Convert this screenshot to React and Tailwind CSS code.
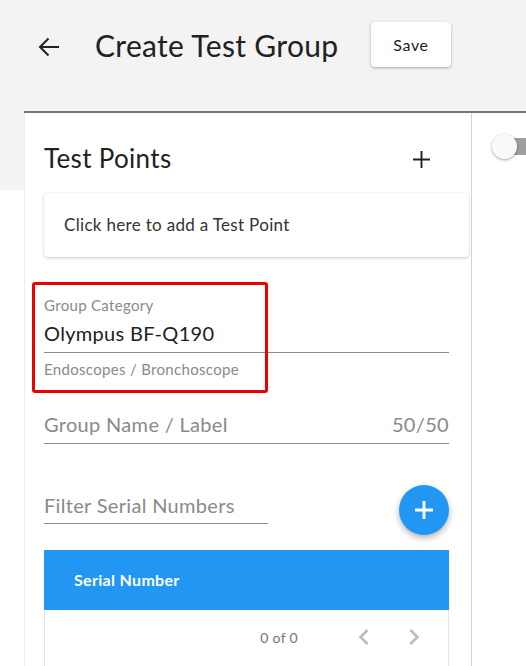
import React from "react"

function BackArrow() {
  return (
    <svg width="22" height="20" viewBox="0 0 22 20" fill="none" stroke="#212121" strokeWidth="2">
      <path d="M21 10H2" />
      <path d="M10.5 1.5 2 10l8.5 8.5" />
    </svg>
  )
}

function PlusIcon({ size = 16, color = "#212121", width = 2 }) {
  return (
    <svg width={size} height={size} viewBox="0 0 16 16" fill="none" stroke={color} strokeWidth={width}>
      <path d="M8 0v16M0 8h16" />
    </svg>
  )
}

function Chevron({ dir }) {
  const d =
    dir === "left"
      ? "M15.41 7.41L14 6l-6 6 6 6 1.41-1.41L10.83 12z"
      : "M10 6L8.59 7.41 13.17 12l-4.58 4.59L10 18l6-6z"
  return (
    <svg width="32" height="32" viewBox="0 0 24 24" fill="#bdbdbd">
      <path d={d} />
    </svg>
  )
}

export default function App() {
  return (
    <div className="w-[526px] h-[666px] overflow-hidden bg-[linear-gradient(#f3f3f3_190px,#ffffff_190px)] font-['Lato',sans-serif] tracking-[0.02em] text-[#212121]">
      <header className="h-[111px] pt-[22px] pl-[38px]">
        <div className="flex items-center h-[45px]">
          <div className="w-[22px] mt-[5px]">
            <BackArrow />
          </div>
          <h1 className="ml-[35px] w-[276px] text-[30px] leading-9 font-normal">Create Test Group</h1>
          <button className="w-[80px] h-[45px] bg-white rounded text-[16px] tracking-[0.04em] shadow-[0_1px_3px_rgba(0,0,0,0.3)]">
            Save
          </button>
        </div>
      </header>

      <div className="flex ml-6 border-t-2 border-[#757575] h-full">
        <section className="w-[448px] shrink-0 bg-white border-l border-r border-l-[#ececec] border-r-[#d4d4d4] pl-[19px] pr-[22px]">
          <div className="flex items-center justify-between h-8 mt-[29px]">
            <h2 className="text-[26px] leading-8">Test Points</h2>
            <div className="mr-[19px] mt-[3px]">
              <PlusIcon size={17} width={1.8} />
            </div>
          </div>

          <div className="mt-[19px] w-[425px] h-[64px] flex items-center pl-5 bg-white rounded shadow-[0_1px_3px_rgba(0,0,0,0.22)] text-[17px] text-[#333]">
            Click here to add a Test Point
          </div>

          <div className="relative mt-[38px]">
            <div className="absolute -left-[12px] -top-[13px] w-[236px] h-[111px] border-[3px] border-[#ee0000] rounded-[3px]" />
            <div className="text-[15px] leading-5 text-[#8a8a8a]">Group Category</div>
            <div className="mt-1 text-[20px] leading-7 pb-[5px] border-b border-[#8a8a8a]">Olympus BF-Q190</div>
            <div className="mt-[6px] text-[15px] leading-5 text-[#8a8a8a]">Endoscopes / Bronchoscope</div>
          </div>

          <div className="mt-[31px] flex justify-between text-[20px] leading-7 pb-[5px] border-b border-[#8a8a8a] text-[#8a8a8a]">
            <span>Group Name / Label</span>
            <span>50/50</span>
          </div>

          <div className="mt-[41px] flex justify-between">
            <div className="mt-[6px] w-[224px] h-[33px] text-[20px] leading-7 border-b border-[#8a8a8a] text-[#8a8a8a]">
              Filter Serial Numbers
            </div>
            <button className="w-[50px] h-[50px] rounded-full bg-[#2196f3] flex items-center justify-center shadow-[0_3px_6px_rgba(0,0,0,0.3)]">
              <PlusIcon size={18} color="#ffffff" width={2.6} />
            </button>
          </div>

          <div className="mt-[15px] h-[60px] bg-[#2196f3] flex items-center pl-[30px] text-white font-bold text-[16px]">
            Serial Number
          </div>
          <div className="h-[60px] border-x border-[#e6e6e6] flex items-start pt-[11px] justify-end pr-[18px]">
            <div className="h-8 flex items-center text-[14px] text-[#757575]">0 of 0</div>
            <div className="ml-[50px]">
              <Chevron dir="left" />
            </div>
            <div className="ml-[18px]">
              <Chevron dir="right" />
            </div>
          </div>
        </section>

        <section className="flex-1 bg-white">
          <div className="flex items-center mt-[21px] ml-[20px]">
            <div className="relative z-10 w-[25px] h-[25px] rounded-full bg-[#fafafa] shadow-[0_1px_3px_rgba(0,0,0,0.35)]" />
            <div className="-ml-[3px] w-[40px] h-[17px] bg-[#9e9e9e]" />
          </div>
        </section>
      </div>
    </div>
  )
}
